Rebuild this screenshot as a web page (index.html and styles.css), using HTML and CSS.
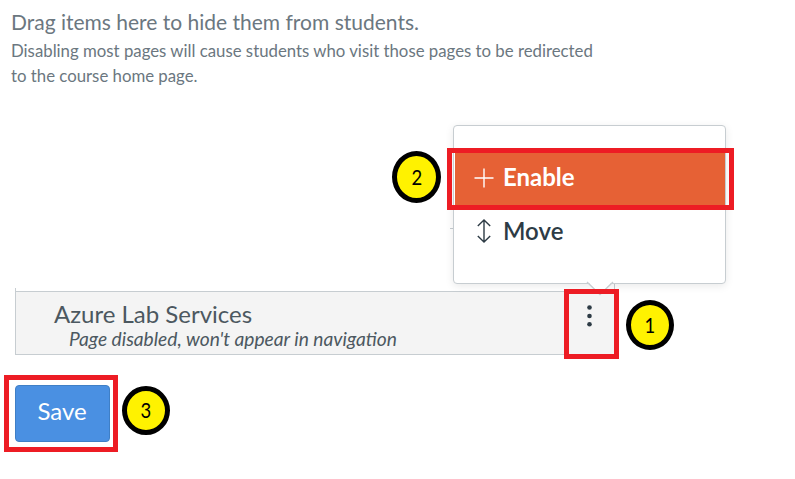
FILE: index.html
```html
<!DOCTYPE html>
<html lang="en">
<head>
<meta charset="utf-8">
<title>Course navigation</title>
<link rel="stylesheet" href="styles.css">
</head>
<body>
<main class="page">
  <header class="intro">
    <h1 class="intro-title"><span>Drag items here to hide them from students.</span></h1>
    <p class="intro-text"><span>Disabling most pages will cause students who visit those pages to be redirected</span><br><span>to the course home page.</span></p>
  </header>
  <section class="nav-item">
    <div class="nav-label">
      <div class="nav-name"><span>Azure Lab Services</span></div>
      <div class="nav-note"><span>Page disabled, won't appear in navigation</span></div>
    </div>
    <svg class="kebab" width="8" height="24" viewBox="0 0 8 24"><circle cx="4.5" cy="3.5" r="2.3"/><circle cx="4.5" cy="12" r="2.3"/><circle cx="4.5" cy="20.3" r="2.3"/></svg>
  </section>
  <button class="save"><span>Save</span></button>
</main>

<div class="edge edge-left"></div>
<div class="edge edge-right"></div>
<div class="edge edge-tick"></div>
<div class="menu">
  <div class="menu-item menu-item-active">
    <svg class="menu-icon" width="22" height="24" viewBox="0 0 22 24"><path d="M1.5 12H20.5M11 2.5V21.5"/></svg>
    <span class="menu-text">Enable</span>
  </div>
  <div class="menu-item">
    <svg class="menu-icon" width="22" height="24" viewBox="0 0 22 24"><path d="M11 1V23M4.8 7L11 1L17.2 7M4.8 17L11 23L17.2 17"/></svg>
    <span class="menu-text move-text">Move</span>
  </div>
</div>
<svg class="pointer" width="28" height="15" viewBox="0 0 28 15"><path class="pointer-fill" d="M1 0L14 13L27 0Z"/><path class="pointer-line" d="M1 1L14 13.5L27 1"/></svg>

<div class="frame frame-enable"></div>
<div class="frame frame-kebab"></div>
<div class="frame frame-save"></div>
<div class="badge badge-one"><span class="digit">1</span></div>
<div class="badge badge-two"><span class="digit">2</span></div>
<div class="badge badge-three"><span class="digit">3</span></div>
</body>
</html>
```
FILE: styles.css
```css
* { box-sizing: border-box; }
body {
  margin: 0;
  width: 795px;
  height: 479px;
  position: relative;
  overflow: hidden;
  background: #fff;
  font-family: Lato, "Liberation Sans", sans-serif;
  color: #2d3b45;
}
.page { display: flex; flex-direction: column; align-items: flex-start; }
.intro { height: 291px; padding: 8px 0 0 11px; color: #6b7780; white-space: nowrap; }
.intro-title { margin: 0; font-size: 21px; line-height: 28px; font-weight: 400; }
.intro-text { margin: 2px 0 0; font-size: 16.8px; line-height: 25px; }
.nav-item {
  display: flex;
  justify-content: space-between;
  width: 600px;
  height: 64px;
  margin-left: 15px;
  padding: 7px 21px 0 38px;
  background: #f4f4f4;
  border: 1px solid #c7cdd1;
  color: #4c5860;
}
.nav-name { font-size: 24px; line-height: 30px; }
.nav-note { padding-left: 15px; font-size: 19.2px; line-height: 20px; font-style: italic; }
.kebab { margin-top: 5px; fill: #2d3b45; }
.save {
  width: 95px;
  height: 57px;
  margin: 30px 0 0 15px;
  padding: 0 1px 6px 0;
  border: 1px solid #3f7fc6;
  border-radius: 4px;
  background: #4a90e2;
  color: #fff;
  font: 24px Lato, sans-serif;
}
.edge { position: absolute; background: #c7cdd1; }
.edge-left { left: 15px; top: 288px; width: 1px; height: 4px; }
.edge-right { left: 614px; top: 284px; width: 1px; height: 6px; }
.edge-tick { left: 450px; top: 228px; width: 4px; height: 1px; }
.menu {
  position: absolute;
  left: 453px;
  top: 125px;
  width: 273px;
  height: 159px;
  padding: 27px 0 0 1px;
  background: #fff;
  border: 1px solid #c7cdd1;
  border-radius: 4px;
  box-shadow: 0 2px 9px rgba(0, 0, 0, .09);
  font-size: 24px;
  font-weight: 700;
}
.menu-item { display: flex; align-items: center; gap: 8px; height: 52px; padding-left: 18px; }
.menu-item-active { background: #e66135; color: #fff; padding-bottom: 2px; }
.menu-icon { fill: none; stroke: currentColor; stroke-width: 1.4; }
.menu-text { padding-bottom: 4px; }
.move-text { padding-bottom: 2px; font-weight: 600; }
.pointer { position: absolute; left: 586px; top: 281px; }
.pointer-fill { fill: #fff; }
.pointer-line { fill: none; stroke: #c7cdd1; stroke-width: 1.3; }
.frame { position: absolute; border: 5px solid #ed1c24; }
.frame-enable { left: 447px; top: 148px; width: 287px; height: 62px; }
.frame-kebab { left: 564px; top: 289px; width: 55px; height: 70px; }
.frame-save { left: 4px; top: 375px; width: 114px; height: 77px; }
.badge {
  position: absolute;
  display: flex;
  align-items: center;
  justify-content: center;
  border: 5px solid #000;
  border-radius: 50%;
  background: #fff200;
  color: #000;
  font-size: 20.5px;
}
.digit { display: inline-block; transform: scaleX(.9); padding-bottom: 1px; }
.badge-one { left: 626px; top: 300px; width: 48px; height: 50px; }
.badge-two { left: 392px; top: 151px; width: 49px; height: 52px; }
.badge-three { left: 122px; top: 386px; width: 48px; height: 49px; }
```
